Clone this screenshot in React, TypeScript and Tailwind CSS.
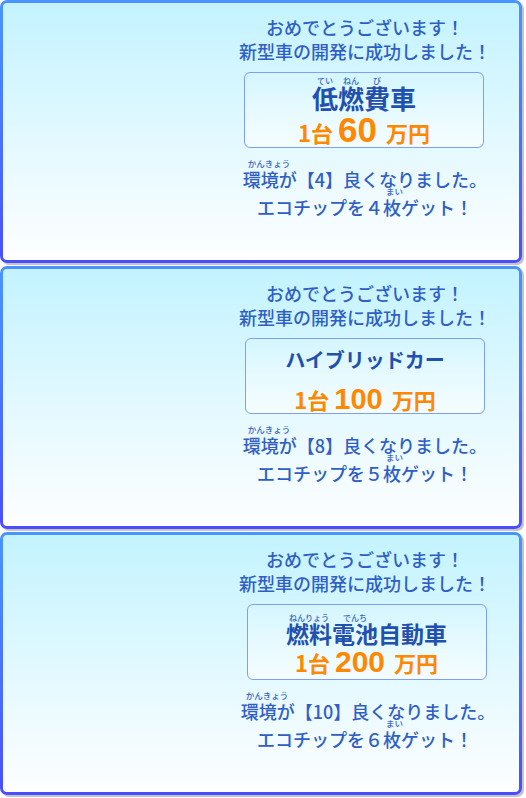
import React from "react";

type Seg = string | [string, string];

const panels: {
  title: Seg[];
  titleCls: string;
  price: string;
  priceCls: string;
  env: string;
  chips: string;
  envCls: string;
  boxCls: string;
}[] = [
  {
    title: [["低", "てい"], ["燃", "ねん"], ["費", "び"], "車"],
    titleCls: "text-[26px] mt-[12px]",
    price: "60",
    priceCls: "text-[35px] mt-[1px]",
    env: "4",
    chips: "４",
    envCls: "",
    boxCls: "-ml-[2px]",
  },
  {
    title: ["ハイブリッドカー"],
    titleCls: "text-[20px] mt-[11px]",
    price: "100",
    priceCls: "text-[29px] mt-[15px]",
    env: "8",
    chips: "５",
    envCls: "",
    boxCls: "",
  },
  {
    title: [["燃料", "ねんりょう"], ["電池", "でんち"], "自動車"],
    titleCls: "text-[23px] mt-[17px]",
    price: "200",
    priceCls: "text-[30px] mt-[2px]",
    env: "10",
    chips: "６",
    envCls: "ml-[6px]",
    boxCls: "ml-[3px]",
  },
];

// furigana placed over its base text
function Rb({ base, rt, small, shift }: { base: string; rt: string; small?: boolean; shift?: string }) {
  return (
    <span className="relative inline-block">
      {base}
      <span
        className={`absolute left-1/2 bottom-full whitespace-nowrap leading-none font-medium text-[#3563c8] ${
          small ? "text-[8px] -translate-x-1/2" : "text-[8.5px]"
        } ${shift ?? ""}`}
      >
        {rt}
      </span>
    </span>
  );
}

function Segs({ segs, small, shift }: { segs: Seg[]; small?: boolean; shift?: string }) {
  return (
    <>
      {segs.map((s, i) =>
        typeof s === "string" ? (
          <React.Fragment key={i}>{s}</React.Fragment>
        ) : (
          <Rb key={i} base={s[0]} rt={s[1]} small={small} shift={shift} />
        )
      )}
    </>
  );
}

function Panel({ p }: { p: (typeof panels)[number] }) {
  return (
    <div className="w-[522px] h-[263px] shrink-0 rounded-[7px] p-[3px] bg-gradient-to-b from-[#4a94ff] to-[#4a4cff] shadow-[2px_2px_0_#c4c4c4]">
      <div className="h-full rounded-[4px] bg-gradient-to-b from-[#c3f3ff] to-[#fdfeff] pl-[227px] pt-[12px]">
        <div className="w-[270px] flex flex-col items-center whitespace-nowrap text-[#2f5fc6] font-medium text-[18px] leading-[24px]">
          <div>おめでとうございます！</div>
          <div>新型車の開発に成功しました！</div>
          <div
            className={`mt-[9px] w-[240px] h-[76px] rounded-[6px] border border-[#7f9ff2] bg-gradient-to-b from-white/0 to-white/60 flex flex-col items-center ${p.boxCls}`}
          >
            <div className={`leading-none font-bold text-[#2150ae] ${p.titleCls}`}>
              <Segs segs={p.title} small />
            </div>
            <div className={`flex items-baseline justify-center leading-none font-bold text-[#ff8800] ${p.priceCls}`}>
              <span className="text-[22px]">1台</span>
              <span className="ml-[5px] font-['Liberation_Sans',sans-serif]">{p.price}</span>
              <span className="text-[22px] ml-[9px]">万円</span>
            </div>
          </div>
          <div className={`mt-[19px] ${p.envCls}`}>
            <Segs segs={[["環境", "かんきょう"], `が【${p.env}】良くなりました。`]} shift="-translate-x-[13px]" />
          </div>
          <div className="mt-[4px]">
            <Segs segs={[`エコチップを${p.chips}`, ["枚", "まい"], "ゲット！"]} shift="-translate-x-[6px]" />
          </div>
        </div>
      </div>
    </div>
  );
}

export default function App() {
  return (
    <div className="w-[526px] h-[798px] bg-white flex flex-col gap-[3px] font-['Noto_Sans_CJK_JP',sans-serif]">
      {panels.map((p, i) => (
        <Panel key={i} p={p} />
      ))}
    </div>
  );
}
